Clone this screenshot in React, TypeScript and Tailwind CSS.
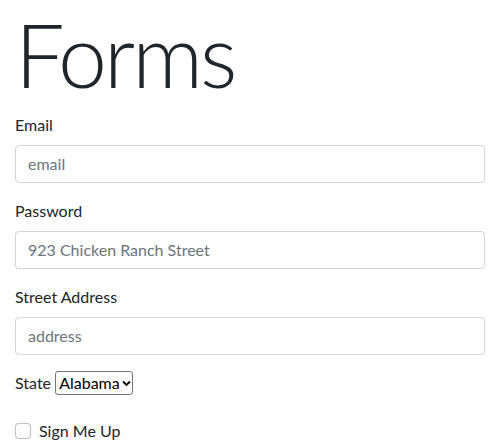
const fieldClass =
  "block h-[38px] w-full rounded border border-[#ced4da] bg-white px-3 py-1.5 text-base leading-6 text-[#495057] placeholder:text-[#6c757d]";

function Field({ label, type, placeholder }: { label: string; type: string; placeholder: string }) {
  return (
    <div className="mb-4">
      <label className="mb-2 inline-block leading-6">{label}</label>
      <input type={type} placeholder={placeholder} className={fieldClass} />
    </div>
  );
}

export default function App() {
  return (
    <div className="bg-white px-[15px] pt-[2px] font-['Lato','Liberation_Sans',sans-serif] text-base leading-6 text-[#212529]">
      <h1 className="mb-[5px] text-[88px] font-light leading-[1.2] tracking-[-3px]">Forms</h1>
      <form>
        <Field label="Email" type="email" placeholder="email" />
        <Field label="Password" type="password" placeholder="923 Chicken Ranch Street" />
        <Field label="Street Address" type="text" placeholder="address" />

        <div className="mb-4">
          <label className="mb-2 inline-block leading-6">State</label>{" "}
          <span className="relative inline-block align-top">
            <select className="h-6 w-[78px] appearance-none rounded-[3px] border border-[#767676] bg-white pl-[3px] pr-3 text-base leading-[22px] text-black">
              <option>Alabama</option>
              <option>Alaska</option>
              <option>Arizona</option>
            </select>
            <svg
              className="pointer-events-none absolute right-[2px] top-[9px] h-[7px] w-[9px]"
              viewBox="0 0 9 7"
              fill="none"
              stroke="#000"
              strokeWidth="1.8"
            >
              <path d="M1 1.5l3.5 3.5L8 1.5" />
            </svg>
          </span>
        </div>

        <div className="flex items-start gap-2">
          <input
            type="checkbox"
            id="signup"
            className="mt-1 h-4 w-4 shrink-0 appearance-none rounded-[4px] border border-black/25 bg-white"
          />
          <label htmlFor="signup" className="leading-6">
            Sign Me Up
          </label>
        </div>
      </form>
    </div>
  );
}
